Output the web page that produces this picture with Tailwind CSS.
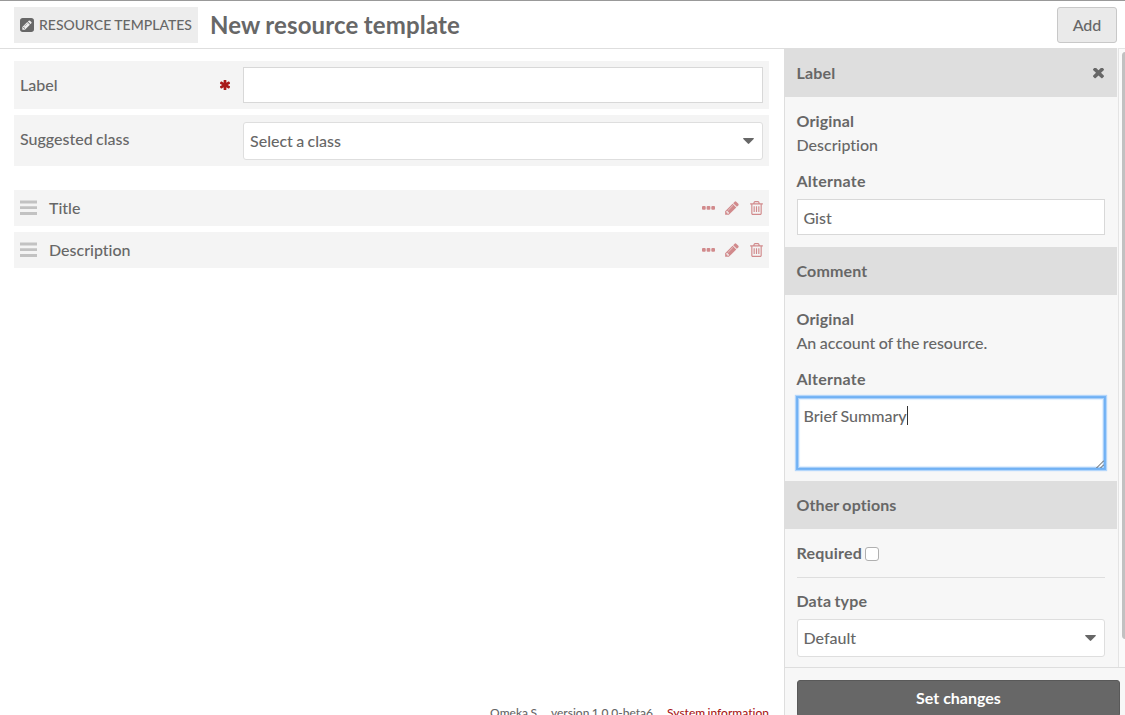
<!DOCTYPE html>
<html lang="en">
<head>
<meta charset="utf-8">
<title>New resource template</title>
<script src="https://cdn.jsdelivr.net/npm/@tailwindcss/browser@4"></script>
</head>
<body class="h-[715px] w-[1125px] overflow-hidden bg-white font-['Lato',sans-serif] text-base leading-6 font-medium text-[#676767] [font-variant-ligatures:none] [word-spacing:-0.7px]">
<svg class="hidden">
  <symbol id="pencil" viewBox="0 0 1536 1792"><path d="M363 1536l91-91-235-235-91 91v107h128v128h107zm523-928q0-22-22-22-10 0-17 7l-542 542q-7 7-7 17 0 22 22 22 10 0 17-7l542-542q7-7 7-17zm-54-192l416 416-832 832h-416v-416zm683 96q0 53-37 90l-166 166-416-416 166-165q36-38 90-38 53 0 91 38l235 234q37 39 37 91z"/></symbol>
  <symbol id="trash" viewBox="0 0 1408 1536"><path d="M512 608v576q0 14-9 23t-23 9h-64q-14 0-23-9t-9-23v-576q0-14 9-23t23-9h64q14 0 23 9t9 23zm256 0v576q0 14-9 23t-23 9h-64q-14 0-23-9t-9-23v-576q0-14 9-23t23-9h64q14 0 23 9t9 23zm256 0v576q0 14-9 23t-23 9h-64q-14 0-23-9t-9-23v-576q0-14 9-23t23-9h64q14 0 23 9t9 23zm128 724v-948h-896v948q0 22 7 40.500t14.500 27 10.500 8.500h832q3 0 10.500-8.500t14.500-27 7-40.500zm-672-1076h448l-48-117q-7-9-17-11h-317q-10 2-17 11zm928 32v64q0 14-9 23t-23 9h-96v948q0 83-47 143.500t-113 60.500h-832q-66 0-113-58.500t-47-141.500v-952h-96q-14 0-23-9t-9-23v-64q0-14 9-23t23-9h309l70-167q15-37 54-63t79-26h320q40 0 79 26t54 63l70 167h309q14 0 23 9t9 23z"/></symbol>
  <symbol id="dots" viewBox="0 0 13 4"><rect width="3.700" height="3.700" rx="1"/><rect x="4.650" width="3.700" height="3.700" rx="1"/><rect x="9.300" width="3.700" height="3.700" rx="1"/></symbol>
  <symbol id="grip" viewBox="0 0 17 15"><path d="M0 .5h17v3H0zM0 6.200h17v2.800H0zM0 12h17v3H0z"/></symbol>
</svg>
<div class="flex h-full flex-col border-t border-[#999]">
  <header class="flex h-12 shrink-0 items-center border-b border-[#dedede] pt-px pr-2 pl-3.5">
    <a class="flex h-9 w-[184px] items-center gap-[5px] bg-[#ededed] pl-1.5 text-sm whitespace-nowrap">
      <svg class="size-3.5 shrink-0" viewBox="0 0 1536 1536" fill="#676767" fill-rule="evenodd"><path d="M404 980l152 152-52 52h-56v-96h-96v-56zm414-390q14 13-3 30l-291 291q-17 17-30 3-14-13 3-30l291-291q17-17 30-3zm-274 690l544-544-288-288-544 544v288h288zm608-608l92-92q28-28 28-68t-28-68l-152-152q-28-28-68-28t-68 28l-92 92zm384-384v960q0 119-84.500 203.500t-203.500 84.500h-960q-119 0-203.500-84.500t-84.500-203.500v-960q0-119 84.500-203.500t203.500-84.500h960q119 0 203.500 84.500t84.500 203.500z"/></svg>
      <span class="[word-spacing:0px]">RESOURCE TEMPLATES</span>
    </a>
    <h1 class="ml-3 text-2xl font-bold tracking-[0.15px]">New resource template</h1>
    <button class="ml-auto h-9 w-[60px] rounded-[3px] border border-[#c8c8c8] bg-[#eaeaea]">Add</button>
  </header>

  <div class="flex min-h-0 flex-1">
    <main class="flex w-[784px] shrink-0 flex-col pt-3 pr-[15px] pl-3.5">
      <div class="flex h-12 shrink-0 items-center bg-[#f4f4f4] px-1.5">
        <label class="w-[200px]">Label</label>
        <svg class="mr-[13px] size-2.5" viewBox="200 192 1392 1408" fill="#a91919"><path d="M1546 1050q46 26 59.500 77.500t-12.500 97.500l-64 110q-26 46-77.500 59.500t-97.500-12.500l-266-153v307q0 52-38 90t-90 38h-128q-52 0-90-38t-38-90v-307l-266 153q-46 26-97.500 12.500t-77.500-59.500l-64-110q-26-46-12.500-97.500t59.500-77.500l266-154-266-154q-46-26-59.500-77.500t12.500-97.500l64-110q26-46 77.500-59.500t97.500 12.500l266 153v-307q0-52 38-90t90-38h128q52 0 90 38t38 90v307l266-153q46-26 97.500-12.500t77.500 59.500l64 110q26 46 12.500 97.500t-59.500 77.500l-266 154z"/></svg>
        <div class="h-9 flex-1 border border-[#d8d8d8] bg-white"></div>
      </div>
      <div class="mt-1.5 flex h-[51px] shrink-0 items-center bg-[#f4f4f4] px-1.5">
        <label class="mb-[3px] w-[223px]">Suggested class</label>
        <div class="mt-px flex h-[38px] flex-1 items-center justify-between rounded-[3px] border border-[#dedede] bg-white pr-2 pl-1.5">
          <span>Select a class</span>
          <svg class="h-1.5 w-[11px]" viewBox="0 0 11 6" fill="#676767"><path d="M.6 0h9.800q.8.200.3.900L6.200 5.600q-.7.600-1.400 0L.3.900Q-.2.200.6 0z"/></svg>
        </div>
      </div>
      <ul class="mt-6 flex flex-col gap-1.5">
        <li class="flex h-9 items-center bg-[#f4f4f4] px-1.5">
          <svg class="mr-3 mb-px h-[15px] w-[17px]" fill="#c2c2c2"><use href="#grip"/></svg>
          <span class="flex-1">Title</span>
          <svg class="mr-2.5 h-1 w-[13px]" fill="#d18a8c"><use href="#dots"/></svg>
          <svg class="mr-[11px] h-4 w-3.5" fill="#d18a8c"><use href="#pencil"/></svg>
          <svg class="h-3.5 w-[13px]" fill="#d18a8c"><use href="#trash"/></svg>
        </li>
        <li class="flex h-9 items-center bg-[#f4f4f4] px-1.5">
          <svg class="mr-3 mb-px h-[15px] w-[17px]" fill="#c2c2c2"><use href="#grip"/></svg>
          <span class="flex-1">Description</span>
          <svg class="mr-2.5 h-1 w-[13px]" fill="#d18a8c"><use href="#dots"/></svg>
          <svg class="mr-[11px] h-4 w-3.5" fill="#d18a8c"><use href="#pencil"/></svg>
          <svg class="h-3.5 w-[13px]" fill="#d18a8c"><use href="#trash"/></svg>
        </li>
      </ul>
      <footer class="mt-auto -mb-[7px] flex h-[18px] justify-end gap-3.5 text-xs leading-[18px]">
        <span>Omeka S</span><span>version 1.0.0-beta6</span><a class="text-[#a91919]">System information</a>
      </footer>
    </main>

    <aside class="-mt-px flex min-w-0 flex-1 flex-col border-l border-[#dedede] bg-[#f7f7f7]">
      <div class="flex h-[619px] shrink-0">
        <div class="w-[332px]">
          <h3 class="flex h-[49px] items-center justify-between bg-[#dedede] pr-[13px] pl-[11.5px] font-bold tracking-[0.15px]">Label
            <svg class="mt-0.5 size-[11px]" viewBox="302 302 1188 1188" fill="#676767"><path d="M1490 1322q0 40-28 68l-136 136q-28 28-68 28t-68-28l-294-294-294 294q-28 28-68 28t-68-28l-136-136q-28-28-28-68t28-68l294-294-294-294q-28-28-28-68t28-68l136-136q28-28 68-28t68 28l294 294 294-294q28-28 68-28t68 28l136 136q28 28 28 68t-28 68l-294 294 294 294q28 28 28 68z" transform="translate(0 -132)"/></svg>
          </h3>
          <div class="p-3">
            <h4 class="-ml-[0.5px] font-bold tracking-[0.15px]">Original</h4>
            <p class="-ml-[0.5px]">Description</p>
            <h4 class="mt-3 -ml-[0.5px] font-bold tracking-[0.25px]">Alternate</h4>
            <div class="mt-1.5 flex h-9 items-center border border-[#d8d8d8] bg-white px-[5.5px] pt-0.5">Gist</div>
          </div>
          <h3 class="flex h-12 items-center bg-[#dedede] pl-[11.5px] font-bold tracking-[0.15px]">Comment</h3>
          <div class="p-3">
            <h4 class="-ml-[0.5px] font-bold tracking-[0.15px]">Original</h4>
            <p class="-ml-[0.5px]">An account of the resource.</p>
            <h4 class="mt-3 -ml-[0.5px] font-bold tracking-[0.25px]">Alternate</h4>
            <div class="relative mt-1.5 flex h-[72px] border border-[#70b1f4] bg-white px-[5.5px] pt-1.5 shadow-[0_0_0_1px_#78b5f5,0_0_1px_2px_#b3d6fb,inset_0_0_0_1px_#a9cff8,inset_0_0_1px_2px_#e0effe]">Brief Summary<span class="mt-0.5 h-[19px] w-px bg-[#333]"></span>
              <svg class="absolute right-0 bottom-0 size-2" viewBox="0 0 8 8" stroke="#555" fill="none"><path d="M.5 8L8 .5M4.500 8L8 4.500"/></svg>
            </div>
          </div>
          <h3 class="flex h-12 items-center bg-[#dedede] pl-[11.5px] font-bold tracking-[0.1px]">Other options</h3>
          <div class="px-3 pt-3">
            <div class="flex h-[37px] items-start border-b border-[#dedede]">
              <label class="-ml-[0.5px] font-bold tracking-[0.2px]">Required</label>
              <span class="mt-1.5 ml-[3px] size-3.5 rounded-[3px] border border-[#b0b0b0] bg-white"></span>
            </div>
            <h4 class="mt-[11px] -ml-[0.5px] font-bold tracking-[0.15px]">Data type</h4>
            <div class="mt-1.5 flex h-[38px] items-center justify-between rounded-[3px] border border-[#dedede] bg-white pr-2 pl-[5.5px]">
              <span>Default</span>
              <svg class="h-1.5 w-[11px]" viewBox="0 0 11 6" fill="#676767"><path d="M.6 0h9.800q.8.200.3.900L6.200 5.600q-.7.600-1.400 0L.3.900Q-.2.200.6 0z"/></svg>
            </div>
          </div>
        </div>
        <div class="ml-px flex-1 overflow-hidden border-t border-l border-[#e4e4e4] bg-[#fafafa] pt-[3px] pl-[3px]">
          <div class="h-[587px] w-[7px] rounded-full bg-[#c1c1c1]"></div>
        </div>
      </div>
      <div class="flex-1 border-t border-[#dedede] pt-3 pl-3">
        <button class="h-[37px] w-[323px] rounded-[3px] border border-[#595959] bg-[#676767] pb-0.5 font-bold text-white">Set changes</button>
      </div>
    </aside>
  </div>
</div>
</body>
</html>
